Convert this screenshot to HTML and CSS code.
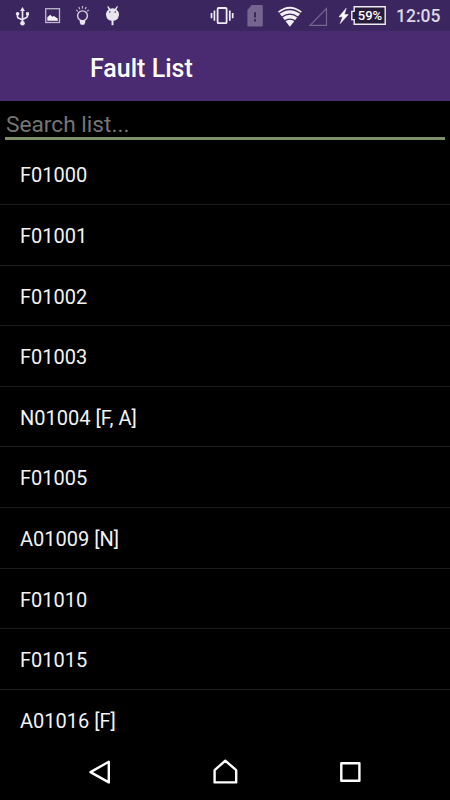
FILE: index.html
```html
<!DOCTYPE html>
<html lang="en">
<head>
    <meta charset="UTF-8">
    <meta name="viewport" content="width=device-width, initial-scale=1.0">
    <title>Fault List</title>
    <link rel="stylesheet" href="styles.css">
</head>
<body>
    <div class="screen">
        <!-- Status bar -->
        <div class="status-bar">
            <div class="notifications">
                <!-- usb -->
                <svg width="20" height="31" viewBox="12 0 20 31">
                    <path d="M22.5 10v13M17.5 13.5v3.2q0 1 1 1.4l4 2M27.5 13.5v2.6q0 1-1 1.4l-4 2" fill="none" stroke="#e9e5ef" stroke-width="1.7"/>
                    <path d="M22.5 7l2.4 4h-4.8zM26 12.2h3v3h-3z" fill="#e9e5ef"/>
                    <circle cx="17.6" cy="13.8" r="1.8" fill="#e9e5ef"/>
                    <circle cx="22.5" cy="23.2" r="2.3" fill="#e9e5ef"/>
                </svg>
                <!-- picture -->
                <svg width="20" height="31" viewBox="42 0 20 31">
                    <rect x="45.7" y="8.7" width="13.8" height="13.8" fill="none" stroke="#bfb7cc" stroke-width="1.3"/>
                    <path d="M47.3 20.7v-3.5l3-2.4 2 2 1.7-.8 3.8 2.8v1.9z" fill="#f3f0f6"/>
                </svg>
                <!-- bulb -->
                <svg width="20" height="31" viewBox="72 0 20 31">
                    <circle cx="82.5" cy="15.8" r="4.9" fill="none" stroke="#d9d3e2" stroke-width="1.4"/>
                    <path d="M79.8 20h5.4v2.5l-1 2.3h-3.4l-1-2.3z" fill="#e9e5ef"/>
                    <path d="M82.5 6v2.6M78.8 7l1 2.2M86.2 7l-1 2.2M76.2 10l1.8 1.4M88.8 10L87 11.4" stroke="#bfb7cc" stroke-width="1.2"/>
                </svg>
                <!-- android debug -->
                <svg width="20" height="31" viewBox="102 0 20 31">
                    <path d="M108.2 6l2 2.8q2.5-1 4.8 0l2-2.8.9.5-1.5 3.2q2.9 2 2.6 5.2-.9 5.8-6.5 5.9-5.6-.1-6.5-5.9-.3-3.2 2.6-5.2l-1.3-3.2z" fill="#e9e5ef"/>
                    <path d="M112.5 20v5.2" stroke="#e9e5ef" stroke-width="2"/>
                    <circle cx="109.8" cy="12" r=".8" fill="#3b265f"/>
                    <circle cx="115.2" cy="12" r=".8" fill="#3b265f"/>
                </svg>
            </div>
            <div class="system">
                <!-- vibrate -->
                <svg width="24" height="31" viewBox="210 0 24 31">
                    <rect x="217.6" y="8" width="9" height="15.2" rx="1" fill="none" stroke="#eeebf3" stroke-width="1.8"/>
                    <path d="M214.4 10.5v10.2M229.8 10.5v10.2" stroke="#eeebf3" stroke-width="1.7"/>
                    <path d="M211.5 13v5.2M232.7 13v5.2" stroke="#eeebf3" stroke-width="1.7"/>
                </svg>
                <!-- sim alert -->
                <svg class="sim" width="16" height="31" viewBox="247 0 16 31">
                    <path d="M251.7 5h9.8q1.3 0 1.3 1.3v18.9q0 1.3-1.3 1.3h-12.8q-1.3 0-1.3-1.3V10z" fill="#76658f"/>
                    <path d="M255 12.3v5.2M255 19.3v2.2" stroke="#3b265f" stroke-width="2"/>
                </svg>
                <!-- wifi -->
                <svg class="wifi" width="26" height="31" viewBox="277 0 26 31">
                    <path d="M278 11.5Q289.8 2 301.8 11.5L289.9 26.8z" fill="#f3f0f6"/>
                    <path d="M279 13.6q10.9-8.2 21.8 0M281.7 17.2q8.2-6 16.4 0M284.7 20.8q5.2-3.5 10.4 0" fill="none" stroke="#3b265f" stroke-width="1.3"/>
                </svg>
                <!-- no signal -->
                <svg class="signal" width="20" height="31" viewBox="308 0 20 31">
                    <path d="M310 25.3L326.5 8.5v16.8z" fill="none" stroke="#76658f" stroke-width="1.2"/>
                </svg>
                <!-- charging -->
                <svg class="bolt" width="12" height="31" viewBox="338 0 12 31">
                    <path d="M346.2 8.2L339 16.8h3.7L340.2 23.6 348.3 14.6h-4z" fill="#fff" stroke="#fff" stroke-width=".5"/>
                </svg>
                <div class="battery">
                    <svg width="35" height="19" viewBox="0 0 35 19">
                        <path d="M3.2.8H34.2V18.2H3.2V13.6H.8V5.4H3.2z" fill="#281c3d" stroke="#eeebf3" stroke-width="1.4"/>
                    </svg>
                    <span class="battery-level">59%</span>
                </div>
                <span class="clock">12:05</span>
            </div>
        </div>

        <div class="app-bar">
            <h1>Fault List</h1>
        </div>

        <div class="search">
            <input type="text" placeholder="Search list...">
        </div>

        <ul class="fault-list">
            <li>F01000</li>
            <li>F01001</li>
            <li>F01002</li>
            <li>F01003</li>
            <li>N01004 [F, A]</li>
            <li>F01005</li>
            <li>A01009 [N]</li>
            <li>F01010</li>
            <li>F01015</li>
            <li>A01016 [F]</li>
        </ul>

        <!-- Navigation bar -->
        <div class="nav-bar">
            <svg width="30" height="30" viewBox="85 754 30 30">
                <path d="M108.8 761.8v20.6L90.5 772.1z"/>
            </svg>
            <svg width="30" height="30" viewBox="210 754 30 30">
                <path d="M214.6 782.4V770.2L225.3 760.7 236.2 770.2V782.4z"/>
            </svg>
            <svg width="30" height="30" viewBox="335 754 30 30">
                <path d="M341.3 763.2h18.1v17.5h-18.1z"/>
            </svg>
        </div>
    </div>
</body>
</html>
```

FILE: styles.css
```css
* {
    box-sizing: border-box;
}
body {
    margin: 0;
    background: #000;
    color: #f3f3f3;
    font-family: Roboto, sans-serif;
}
.screen {
    display: flex;
    flex-direction: column;
    width: 450px;
    height: 800px;
    overflow: hidden;
}
svg {
    display: block;
    flex: none;
}

/* status bar */
.status-bar {
    display: flex;
    flex: none;
    justify-content: space-between;
    height: 31px;
    padding: 0 8px 0 12px;
    background: #3b265f;
}
.notifications {
    display: flex;
    gap: 10px;
}
.system {
    display: flex;
    align-items: center;
}
.sim {
    margin-left: 13px;
}
.wifi {
    margin-left: 14px;
}
.signal {
    margin-left: 5px;
}
.bolt {
    margin-left: 10px;
}
.battery {
    position: relative;
    margin-left: 1px;
}
.battery-level {
    position: absolute;
    top: 0;
    left: 3px;
    width: 32px;
    color: #fff;
    font-size: 13px;
    font-weight: 500;
    line-height: 19px;
    text-align: center;
}
.clock {
    width: 46px;
    margin-left: 10px;
    color: #dcd7e4;
    font-size: 17.5px;
    font-weight: 500;
    line-height: 31px;
    padding-top: 2px;
    white-space: nowrap;
}

/* title */
.app-bar {
    display: flex;
    flex: none;
    align-items: center;
    height: 70px;
    padding: 4px 0 0 90px;
    background: #4a2b71;
}
.app-bar h1 {
    margin: 0;
    color: #fff;
    font-size: 25px;
    font-weight: 500;
}

/* search */
.search {
    flex: none;
    height: 43.4px;
    padding: 5px 5px 0;
}
.search input {
    display: block;
    width: 100%;
    height: 34px;
    padding: 5px 1px 0;
    border: none;
    border-bottom: 3px solid #7f8f66;
    outline: none;
    background: none;
    color: #fff;
    font-family: inherit;
    font-size: 22.7px;
}
.search input::placeholder {
    color: #757575;
}

/* list */
.fault-list {
    flex: 1;
    min-height: 0;
    margin: 0;
    padding: 0;
    overflow: hidden;
    list-style: none;
}
.fault-list li {
    height: 60.6px;
    padding-left: 20px;
    border-bottom: 1px solid #1c1c1c;
    font-size: 20px;
    line-height: 62px;
}

.nav-bar {
    display: flex;
    flex: none;
    justify-content: center;
    gap: 95px;
    height: 60px;
    padding-top: 14px;
    background: #000;
}
.nav-bar svg {
    fill: none;
    stroke: #fff;
    stroke-width: 2.4;
    stroke-linejoin: round;
}
```
